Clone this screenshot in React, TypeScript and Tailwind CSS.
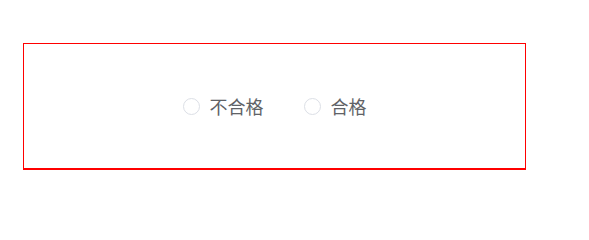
const OPTIONS = ['不合格', '合格']

export default function App() {
  return (
    <div className="w-[589px] h-[212px] bg-white pt-[43px] pl-[23px]">
      <div className="w-[503px] h-[127px] border border-b-2 border-[#ff0000] flex items-center justify-center gap-10">
        {OPTIONS.map((label) => (
          <label key={label} className="flex items-center gap-[10px] cursor-pointer">
            <span className="w-[17px] h-[17px] rounded-full border border-[#dcdfe6] bg-white" />
            <span
              className="text-[18px] leading-none text-[#606266]"
              style={{ fontFamily: "'Noto Sans CJK SC', 'Noto Sans', sans-serif" }}
            >
              {label}
            </span>
          </label>
        ))}
      </div>
    </div>
  )
}
